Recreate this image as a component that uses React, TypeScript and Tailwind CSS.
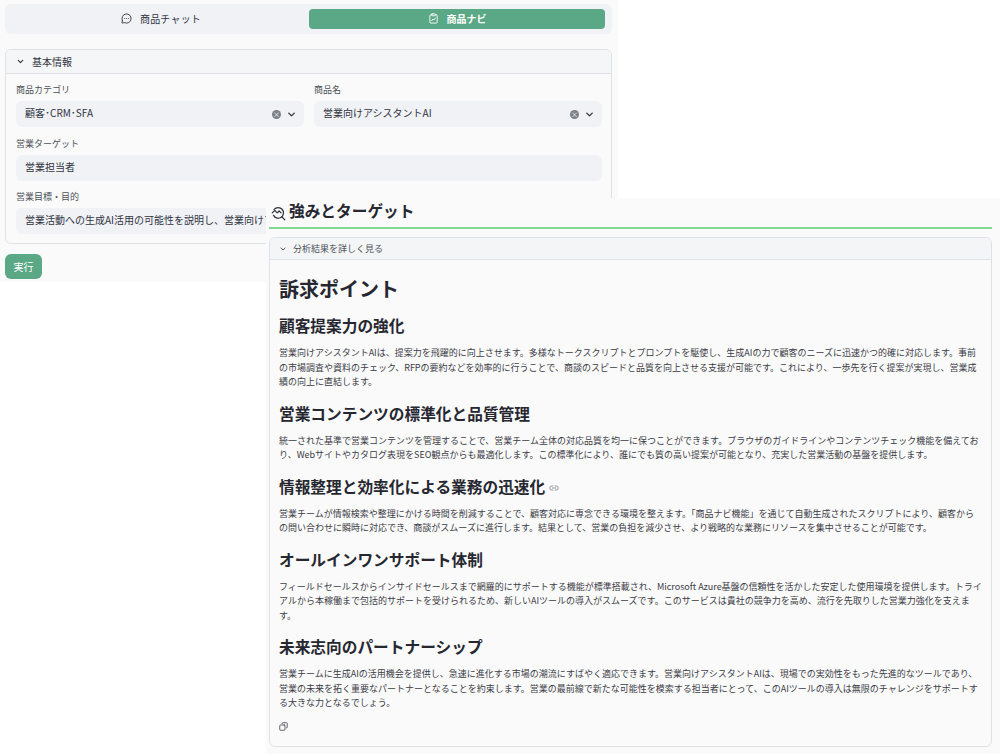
import React from 'react';
import { ChevronDown, Copy, Link2, MessageCircleMore } from 'lucide-react';

const font = { fontFamily: '"Noto Sans CJK JP", sans-serif' };

// Clipboard with a small chart line
const ClipboardChart = () => (
  <svg viewBox="0 0 24 24" className="w-[11px] h-[11px]" fill="none" stroke="currentColor" strokeWidth={2} strokeLinecap="round" strokeLinejoin="round">
    <rect x="8" y="2" width="8" height="4" rx="1" />
    <path d="M16 4h2a2 2 0 0 1 2 2v14a2 2 0 0 1-2 2H6a2 2 0 0 1-2-2V6a2 2 0 0 1 2-2h2" />
    <path d="M8 17l3-4 2 2 3-4" />
  </svg>
);

// Magnifier with a trend line inside
const QueryStats = () => (
  <svg viewBox="0 0 24 24" className="w-[15px] h-[15px] text-[#31333f]" fill="none" stroke="currentColor" strokeWidth={2} strokeLinecap="round" strokeLinejoin="round">
    <path d="M5 5.5A8.5 8.5 0 1 1 4 15" />
    <path d="M2 11l4-4 4 4 3-3 3 3" />
    <path d="M17 17l5 5" />
  </svg>
);

// Select / text field
const Field: React.FC<{ label: string; value: string; select?: boolean; className?: string }> = ({ label, value, select, className }) => (
  <div className={className}>
    <div className="text-[9px] leading-[12px] text-[#4b5158] mb-[5px] whitespace-nowrap">{label}</div>
    <div className="h-[26px] rounded-[6px] bg-[#f0f2f6] pl-[9px] pr-[7px] flex items-center text-[10px] text-[#31333f] whitespace-nowrap overflow-hidden">
      <span className="flex-grow pb-[3px]">{value}</span>
      {select && (
        <>
          <span className="w-[9px] h-[9px] rounded-full bg-[#7c808a] flex items-center justify-center text-white text-[7px] leading-none mr-[5px]">×</span>
          <ChevronDown className="w-[11px] h-[11px] text-[#31333f]" strokeWidth={3} />
        </>
      )}
    </div>
  </div>
);

const Section: React.FC<{ title: React.ReactNode; lines: string[] }> = ({ title, lines }) => (
  <section>
    <h3 className="text-[15.7px] leading-[20px] font-bold text-[#262730] flex items-center">{title}</h3>
    <p className="mt-[10px] text-[9px] leading-[14.5px] text-[#3a3c46] whitespace-nowrap">
      {lines.map((l, i) => (
        <span key={i} className="block">{l}</span>
      ))}
    </p>
  </section>
);

export default function App() {
  return (
    <div className="relative w-[1000px] h-[754px] bg-white overflow-hidden" style={font}>
      {/* form window */}
      <div className="absolute left-0 top-0 w-[618px] h-[282px] bg-[#fafafa] pl-[5px] pr-[6px] pt-[4px]">
        <div className="h-[30px] rounded-[6px] bg-[#f0f2f6] flex items-center gap-[4px] pl-[4px] pr-[7px] pb-[1px]">
          <div className="w-[296px] flex items-center justify-center gap-[8px] pl-[8px] text-[10px] tracking-[0.2px] text-[#31333f]">
            <MessageCircleMore className="w-[11px] h-[11px]" />
            商品チャット
          </div>
          <div className="w-[296px] h-[20px] rounded-[4px] bg-[#5aa885] flex items-center justify-center gap-[8px] text-[10px] font-bold text-white">
            <ClipboardChart />
            商品ナビ
          </div>
        </div>

        <div className="mt-[15px] h-[195px] rounded-[6px] border border-[#dfe1e5] overflow-hidden">
          <div className="h-[24px] bg-[#f5f6f8] border-b border-[#dfe1e5] flex items-center pl-[10px] gap-[7px] text-[10px] text-[#31333f]">
            <ChevronDown className="w-[9px] h-[9px]" strokeWidth={3} />
            基本情報
          </div>
          <div className="pl-[10px] pr-[9px] pt-[10px]">
            <div className="flex gap-[10px]">
              <Field className="w-[288px]" label="商品カテゴリ" value="顧客･CRM･SFA" select />
              <Field className="w-[288px]" label="商品名" value="営業向けアシスタントAI" select />
            </div>
            <Field className="mt-[11px]" label="営業ターゲット" value="営業担当者" />
            <Field className="mt-[10px]" label="営業目標・目的" value="営業活動への生成AI活用の可能性を説明し、営業向けアシスタントAIの導入を提案する" />
          </div>
        </div>

        <button className="mt-[10px] block w-[37px] h-[25px] rounded-[6px] bg-[#5aa885] text-white text-[10px]">実行</button>
      </div>

      {/* result window */}
      <div className="absolute left-[266px] top-[198px] w-[734px] h-[556px] bg-[#fafafa] pl-[3px] pr-[8px]">
        <div className="h-[31px] flex items-end pb-[6px] gap-[3px] border-b-2 border-[#7ddc8f] pl-[2px]">
          <QueryStats />
          <span className="text-[15.7px] leading-[20px] font-bold text-[#262730]">強みとターゲット</span>
        </div>

        <div className="mt-[8px] h-[510px] rounded-[6px] border border-[#dfe1e5] overflow-hidden">
          <div className="h-[22px] bg-[#f4f5f7] border-b border-[#dfe1e5] flex items-center pl-[9px] gap-[6px] text-[9px] text-[#4b5158]">
            <ChevronDown className="w-[8px] h-[8px]" strokeWidth={3} />
            分析結果を詳しく見る
          </div>
          <div className="pl-[9px] pt-[16px]">
            <h2 className="text-[20px] leading-[26px] font-bold text-[#262730]">訴求ポイント</h2>
            <div className="mt-[14px] flex flex-col gap-[14px]">
              <Section
                title="顧客提案力の強化"
                lines={[
                  '営業向けアシスタントAIは、提案力を飛躍的に向上させます。多様なトークスクリプトとプロンプトを駆使し、生成AIの力で顧客のニーズに迅速かつ的確に対応します。事前',
                  'の市場調査や資料のチェック、RFPの要約などを効率的に行うことで、商談のスピードと品質を向上させる支援が可能です。これにより、一歩先を行く提案が実現し、営業成',
                  '績の向上に直結します。',
                ]}
              />
              <Section
                title="営業コンテンツの標準化と品質管理"
                lines={[
                  '統一された基準で営業コンテンツを管理することで、営業チーム全体の対応品質を均一に保つことができます。ブラウザのガイドラインやコンテンツチェック機能を備えてお',
                  'り、Webサイトやカタログ表現をSEO観点からも最適化します。この標準化により、誰にでも質の高い提案が可能となり、充実した営業活動の基盤を提供します。',
                ]}
              />
              <Section
                title={
                  <>
                    情報整理と効率化による業務の迅速化
                    <Link2 className="ml-[4px] mt-[2px] w-[10px] h-[10px] text-[#80838a]" />
                  </>
                }
                lines={[
                  '営業チームが情報検索や整理にかける時間を削減することで、顧客対応に専念できる環境を整えます。「商品ナビ機能」を通じて自動生成されたスクリプトにより、顧客から',
                  'の問い合わせに瞬時に対応でき、商談がスムーズに進行します。結果として、営業の負担を減少させ、より戦略的な業務にリソースを集中させることが可能です。',
                ]}
              />
              <Section
                title="オールインワンサポート体制"
                lines={[
                  'フィールドセールスからインサイドセールスまで網羅的にサポートする機能が標準搭載され、Microsoft Azure基盤の信頼性を活かした安定した使用環境を提供します。トライ',
                  'アルから本稼働まで包括的サポートを受けられるため、新しいAIツールの導入がスムーズです。このサービスは貴社の競争力を高め、流行を先取りした営業力強化を支えま',
                  'す。',
                ]}
              />
              <Section
                title="未来志向のパートナーシップ"
                lines={[
                  '営業チームに生成AIの活用機会を提供し、急速に進化する市場の潮流にすばやく適応できます。営業向けアシスタントAIは、現場での実効性をもった先進的なツールであり、',
                  '営業の未来を拓く重要なパートナーとなることを約束します。営業の最前線で新たな可能性を模索する担当者にとって、このAIツールの導入は無限のチャレンジをサポートす',
                  'る大きな力となるでしょう。',
                ]}
              />
            </div>
            <Copy className="mt-[11px] w-[9px] h-[9px] text-[#31333f] -scale-x-100" />
          </div>
        </div>
      </div>
    </div>
  );
}
